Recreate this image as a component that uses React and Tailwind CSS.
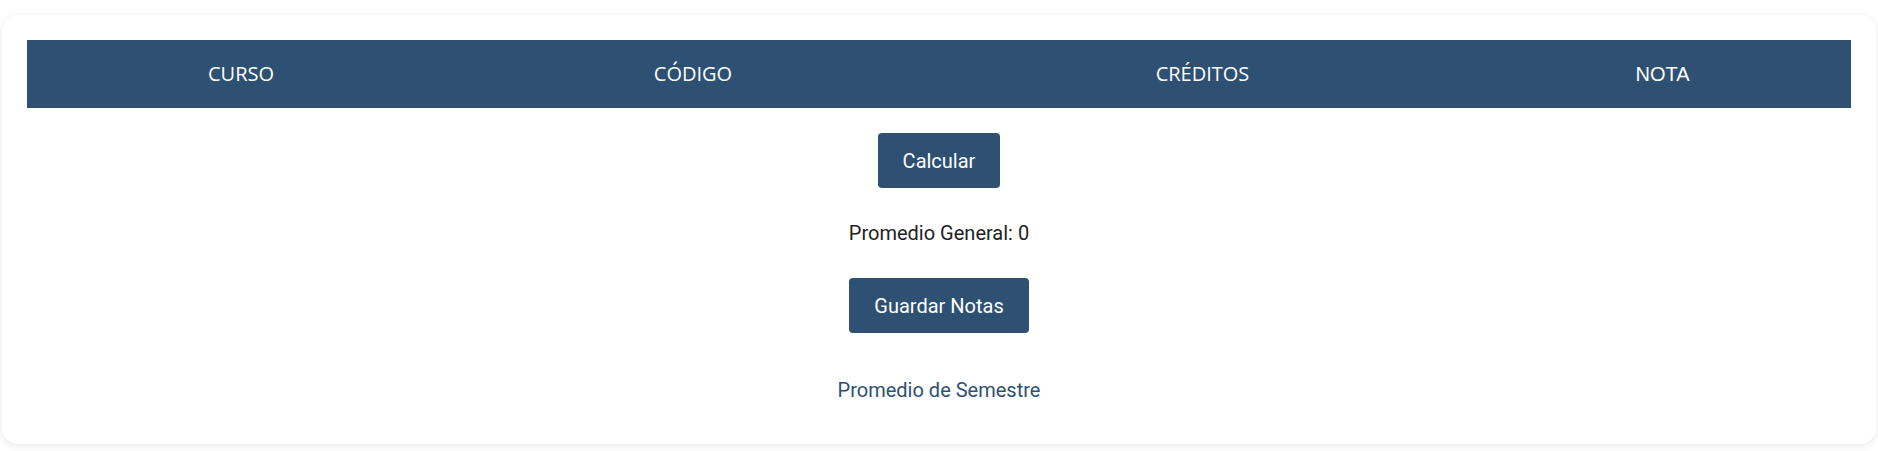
const headers = [
  { label: 'CURSO', className: "font-['Open_Sans',sans-serif]" },
  { label: 'CÓDIGO', className: "font-['Open_Sans',sans-serif]" },
  { label: 'CRÉDITOS', className: "font-['Open_Sans',sans-serif]" },
  { label: 'NOTA', className: "font-['Liberation_Sans',Arial,sans-serif]" },
];

const App = () => {
  return (
    <div className="min-h-[451px] bg-white px-[2px] pt-[15px] font-['Roboto',sans-serif]">
      {/* Card */}
      <div className="rounded-[16px] bg-white px-[25px] pt-[25px] pb-[42px] shadow-[0_2px_10px_rgba(0,0,0,0.09)]">
        {/* Table header */}
        <div className="grid h-[68px] grid-cols-[428px_476px_543px_1fr] bg-[#2e5073] text-white">
          {headers.map((h) => (
            <div
              key={h.label}
              className={`flex items-center justify-center text-[20px] ${h.className}`}
            >
              {h.label}
            </div>
          ))}
        </div>

        <div className="flex flex-col items-center">
          <button className="mt-[25px] h-[55px] rounded-[4px] bg-[#2e5073] px-[25px] text-[20px] leading-[24px] text-white">
            Calcular
          </button>

          <p className="mt-[33px] text-[20px] leading-[24px] text-[#222222]">
            Promedio General: 0
          </p>

          <button className="mt-[33px] h-[55px] rounded-[4px] bg-[#2e5073] px-[25px] text-[20px] leading-[24px] text-white">
            Guardar Notas
          </button>

          <a className="mt-[45px] text-[20px] leading-[24px] text-[#2e5073]">
            Promedio de Semestre
          </a>
        </div>
      </div>
    </div>
  );
};

export default App;
